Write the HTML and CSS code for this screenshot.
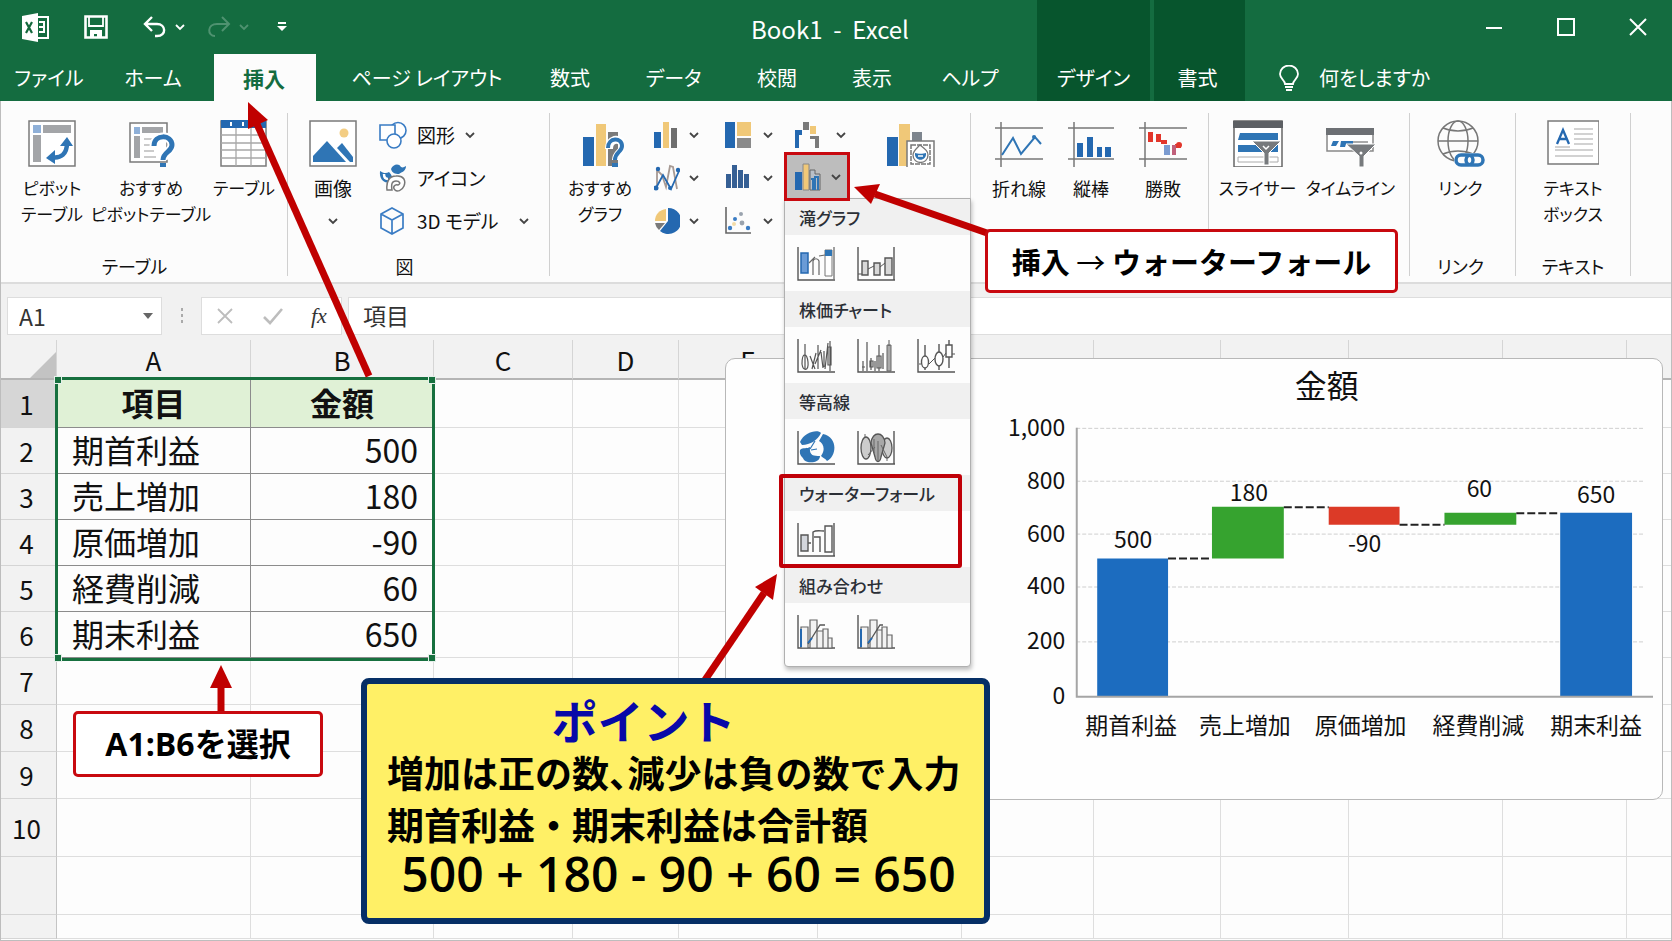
FILE: index.html
```html
<!DOCTYPE html>
<html lang="ja">
<head>
<meta charset="utf-8">
<title>Book1 - Excel</title>
<link rel="stylesheet" href="styles.css">
</head>
<body>
<svg class="defs" aria-hidden="true">
  <symbol id="chev" viewBox="0 0 10 8"><path d="M1 2l4 4 4-4" fill="none" stroke="currentColor" stroke-width="1.8"/></symbol>
  <symbol id="axes" viewBox="0 0 38 34"><path d="M1 0V33H38" fill="none" stroke="#555" stroke-width="1.4"/></symbol>
</svg>
<div class="window">
  <header class="header">
    <div class="titlebar">
      <div class="quick">
        <svg class="logo" viewBox="0 0 28 29" width="28" height="29"><path d="M15 4h11v21H15" fill="none" stroke="#fff" stroke-width="2"/><path d="M0 3L16 0v29L0 26z" fill="#fff"/><path d="M17 9h5M17 14h5M17 19h5M22 8v12" stroke="#fff" stroke-width="2" fill="none"/><path d="M4 9l6 11M10 9L4 20" stroke="#14693d" stroke-width="2.2"/></svg>
        <button class="tool save" aria-label="保存"><svg viewBox="0 0 24 24" width="24" height="24"><path d="M1.500 1.500h21v21h-21z" fill="none" stroke="#fff" stroke-width="2.600"/><path d="M5 2v9h14V2" fill="none" stroke="#fff" stroke-width="1.800"/><path d="M6 23v-8h12v8h-5v-4h-3v4z" fill="#fff"/></svg></button>
        <button class="tool undo" aria-label="元に戻す"><svg viewBox="0 0 24 22" width="24" height="22"><path d="M9 1L2 8l7 7M2 8h12c9 0 10 12 0 12h-2" fill="none" stroke="#fff" stroke-width="2.400"/></svg><svg class="chev" width="10" height="8"><use href="#chev"/></svg></button>
        <button class="tool redo" aria-label="やり直し"><svg viewBox="0 0 24 22" width="24" height="22"><path d="M15 1l7 7-7 7M22 8H10C0 8 0 20 8 20" fill="none" stroke="currentColor" stroke-width="2"/></svg><svg class="chev" width="10" height="8"><use href="#chev"/></svg></button>
        <button class="tool" aria-label="カスタマイズ"><svg viewBox="0 0 10 10" width="10" height="10"><path d="M1 1h8" stroke="#fff" stroke-width="2"/><path d="M0 4h10L5 9z" fill="#fff"/></svg></button>
      </div>
      <h1 class="doc">Book1 &nbsp;-&nbsp; Excel</h1>
      <div class="winbtns">
        <button aria-label="最小化"><svg viewBox="0 0 18 18" width="18" height="18"><path d="M1 10h16" stroke="#fff" stroke-width="2"/></svg></button>
        <button aria-label="最大化"><svg viewBox="0 0 18 18" width="18" height="18"><path d="M1 1h16v16H1z" fill="none" stroke="#fff" stroke-width="2"/></svg></button>
        <button aria-label="閉じる"><svg viewBox="0 0 18 18" width="18" height="18"><path d="M1 1l16 16M17 1L1 17" stroke="#fff" stroke-width="2"/></svg></button>
      </div>
    </div>
    <nav class="tabs">
      <button class="tab t-file">ファイル</button>
      <button class="tab t-home">ホーム</button>
      <button class="tab t-insert active">挿入</button>
      <button class="tab t-page">ページ レイアウト</button>
      <button class="tab t-short">数式</button>
      <button class="tab t-data">データ</button>
      <button class="tab t-short">校閲</button>
      <button class="tab t-view">表示</button>
      <button class="tab t-help">ヘルプ</button>
      <button class="tab context t-design">デザイン</button>
      <button class="tab context t-format">書式</button>
      <button class="tab tell"><svg viewBox="0 0 20 26" width="20" height="26"><path d="M6 19c0-4-5-5-5-10a9 8.500 0 0 1 18 0c0 5-5 6-5 10z" fill="none" stroke="#fff" stroke-width="1.800"/><path d="M6 22h8M7 25h6" stroke="#fff" stroke-width="1.800"/></svg><span>何をしますか</span></button>
    </nav>
  </header>

  <section class="ribbon" aria-label="挿入">
    <div class="group g-table">
      <div class="items">
        <button class="big w-pivot"><svg viewBox="0 0 48 48" width="48" height="48"><path d="M1 2h46v45H1z" fill="#fff" stroke="#7a7a7a" stroke-width="1.500"/><path d="M5 6h8v8H5z" fill="#8fb0d8"/><path d="M15 6h28v8H15zM5 16h8v27H5z" fill="#a3a5a8"/><path d="M23 38c10 2 16-3 16-14" fill="none" stroke="#2f75b5" stroke-width="4.500"/><path d="M32 27l7-9 6 9zM27 31l-9 8 9 6z" fill="#2f75b5"/></svg><span>ピボット<br>テーブル</span></button>
        <button class="big w-rec"><svg viewBox="0 0 48 48" width="48" height="48"><path d="M3 4h37v39H3z" fill="#fff" stroke="#7a7a7a" stroke-width="1.500"/><path d="M7 8h6v7H7z" fill="#8fb0d8"/><path d="M15 8h21v6H15zM7 17h6v22H7z" fill="#a3a5a8"/><path d="M17 20h12M17 26h8M17 32h10M17 38h12" stroke="#bbb" stroke-width="1.500"/><path d="M27 27c0-12 18-12 18-1 0 7-9 8-9 15" fill="none" stroke="#fff" stroke-width="9"/><path d="M27 27c0-12 18-12 18-1 0 7-9 7-9 15" fill="none" stroke="#2f75b5" stroke-width="5"/><path d="M33 44h6v5h-6z" fill="#2f75b5"/></svg><span>おすすめ<br>ピボットテーブル</span></button>
        <button class="big w-tbl"><svg viewBox="0 0 48 48" width="48" height="48"><path d="M1 2h45v45H1z" fill="#fff" stroke="#7a7a7a" stroke-width="1.500"/><path d="M1 1h45v8H1z" fill="#2468b0"/><path d="M1 16h45M1 24h45M1 31h45M1 39h45M16 9v38M31 9v38" stroke="#a8a8a8" stroke-width="1.300"/><path d="M11 3v4M23 3v4M36 3v4" stroke="#fff" stroke-width="2"/></svg><span>テーブル</span></button>
      </div>
      <div class="caption">テーブル</div>
    </div>
    <div class="group g-pic">
      <div class="items">
        <button class="big w-img"><svg viewBox="0 0 48 48" width="48" height="48"><path d="M1 2h46v45H1z" fill="#fff" stroke="#7a7a7a" stroke-width="1.500"/><path d="M4 43V37L18 22 37 43z" fill="#2f75b5"/><path d="M28 29l5-5 11 14v5h-3z" fill="#2f75b5"/><circle cx="35" cy="14" r="4.500" fill="#f3cd83"/></svg><span class="kanji">画像</span><svg class="chev low" width="10" height="8"><use href="#chev"/></svg></button>
        <div class="list">
          <button class="row"><svg viewBox="0 0 28 28" width="28" height="28"><g fill="#fff" stroke="#3a7cc4" stroke-width="1.600"><circle cx="19" cy="9.500" r="8"/><path d="M1 4h15v15H1z"/><circle cx="15" cy="20" r="7"/></g></svg>図形<svg class="chev" width="10" height="8"><use href="#chev"/></svg></button>
          <button class="row"><svg viewBox="0 0 28 28" width="28" height="28"><path d="M1 7c3 2 6 3 9 1 3 3 4 6 3 9-7 4-13-1-12-10z" fill="#2f75b5"/><path d="M5 10c0 3 1 5 4 5" stroke="#fff" stroke-width="2.500" fill="none"/><path d="M12 5c2-5 8-6 10-2 2 1 3 0 5-1 0 5-4 6-7 8-4 0-7-1-8-5z" fill="#2f75b5"/><path d="M8 26c-1-8 2-14 9-14 8-1 10 5 8 10-2 5-7 6-9 4-3-3 0-6 3-5 3-1 2-4-2-4-4 0-5 3-4 9z" fill="#fff" stroke="#777" stroke-width="1.500"/></svg>アイコン</button>
          <button class="row"><svg viewBox="0 0 28 28" width="28" height="28"><path d="M13 1l11 6v14l-11 6-11-6V7zM2 7l11 6 11-6M13 13v14" fill="none" stroke="#3a7cc4" stroke-width="1.700"/></svg>3D モデル<svg class="chev far" width="10" height="8"><use href="#chev"/></svg></button>
        </div>
      </div>
      <div class="caption">図</div>
    </div>
    <div class="group g-chart">
      <div class="items">
        <button class="big w-recchart"><svg viewBox="0 0 48 48" width="48" height="48"><path d="M7 18h11v29H7z" fill="#2468b0"/><path d="M20 5h10v42H20z" fill="#f0c878"/><path d="M32 13h10v34H32z" fill="#7a7a7a"/><path d="M33 30c0-12 14-12 14-2 0 5-7 6-7 13" fill="none" stroke="#fff" stroke-width="8"/><path d="M32 29c0-11 14-11 14-2 0 6-7 6-7 14" fill="none" stroke="#2f75b5" stroke-width="4"/><path d="M36 44h6v5h-6z" fill="#2f75b5"/></svg><span>おすすめ<br>グラフ</span></button>
        <div class="gallery">
          <button class="split" aria-label="縦棒"><svg viewBox="0 0 26 28" width="26" height="28"><path d="M0 11h7v16H0z" fill="#2468b0"/><path d="M9 1h6v26H9z" fill="#f0c878"/><path d="M17 7h6v20h-6z" fill="#6e6e6e"/></svg><svg class="chev" width="10" height="8"><use href="#chev"/></svg></button>
          <button class="split" aria-label="階層"><svg viewBox="0 0 26 28" width="26" height="28"><path d="M0 1h10v26H0z" fill="#2468b0"/><path d="M12 1h14v14H12z" fill="#f0c878"/><path d="M12 17h14v10H12z" fill="#8a8a8a"/></svg><svg class="chev" width="10" height="8"><use href="#chev"/></svg></button>
          <button class="split third" aria-label="滝"><svg viewBox="0 0 26 28" width="26" height="28"><path d="M0 9h7v5H4v13H0z" fill="#2468b0"/><path d="M8 1h6v8H8z" fill="#7a7a7a"/><path d="M15 5h6v8h-6z" fill="#f0c878"/><path d="M15 15h9v12h-4v-9h-5z" fill="#7a7a7a"/></svg><svg class="chev" width="10" height="8"><use href="#chev"/></svg></button>
          <button class="split" aria-label="折れ線"><svg viewBox="0 0 26 28" width="26" height="28"><path d="M3 22V6l5 5 4 12 4-21 3 1 4 22" fill="none" stroke="#a79a94" stroke-width="1.800"/><path d="M2 24L9 11l8 14 8-18" fill="none" stroke="#2468b0" stroke-width="1.800"/><g fill="#2468b0"><circle cx="2" cy="24" r="2.500"/><circle cx="4" cy="5" r="2.200"/><circle cx="24" cy="6" r="2.200"/><circle cx="16" cy="24" r="2"/></g></svg><svg class="chev" width="10" height="8"><use href="#chev"/></svg></button>
          <button class="split" aria-label="統計"><svg viewBox="0 0 26 28" width="26" height="28"><path d="M1 10h5v14H1zM7 1h5v23H7zM13 6h5v18h-5zM19 10h5v14h-5z" fill="#355f94"/></svg><svg class="chev" width="10" height="8"><use href="#chev"/></svg></button>
          <div class="picker">
            <button class="split chosen" aria-label="ウォーターフォール グラフの挿入" aria-expanded="true"><svg viewBox="0 0 26 28" width="26" height="28"><path d="M0 9h7v18H0z" fill="#2468b0"/><path d="M8 1h6v26H8z" fill="#f0c878" stroke="#888"/><path d="M15 7h5v4h5v16H15z" fill="#b9c0c8" stroke="#666"/><path d="M16 16h2v11M20 27V14h3v13" stroke="#2f75b5" stroke-width="2" fill="none"/></svg><svg class="chev" width="10" height="8"><use href="#chev"/></svg></button>
            <div class="menu">
              <h2>滝グラフ</h2>
              <div class="choices">
                <button aria-label="滝 1"><svg viewBox="0 0 38 34" width="38" height="34"><use href="#axes"/><path d="M37 0v33" stroke="#777" stroke-width="1.400"/><path d="M4 6h7v20H4z" fill="#6a9bd6" stroke="#2468b0" stroke-width="1.500"/><path d="M16 28V14c1-3 5-3 6 0v14M12 16l6-6M22 9l6-1" fill="none" stroke="#666" stroke-width="1.200"/><path d="M28 3h7v26h-7z" fill="#fff" stroke="#777"/><path d="M28 3h7v6h-7z" fill="#2f75b5"/></svg></button>
                <button aria-label="滝 2"><svg viewBox="0 0 38 34" width="38" height="34"><use href="#axes"/><path d="M37 0v33" stroke="#555" stroke-width="1.400"/><path d="M5 14h6v14H5zM17 16h6v12h-6zM28 11h7v17h-7z" fill="#d8d8d8" stroke="#555" stroke-width="1.400"/><path d="M1 27h4M11 22l6-3M23 20l5-4" stroke="#555" fill="none"/></svg></button>
              </div>
              <h2>株価チャート</h2>
              <div class="choices">
                <button aria-label="株価 1"><svg viewBox="0 0 38 34" width="38" height="34"><use href="#axes"/><path d="M8 5v26M5 25c0-12 5-12 6-2s-5 9-6 2M13 17l5 13M15 30l4-16M21 6v24M18 25l6-14M24 13l2 16M28 30l3-26M31 8h3v18h-3zM33 2v30M27 12v16" fill="none" stroke="#555" stroke-width="1.200"/></svg></button>
                <button aria-label="株価 2"><svg viewBox="0 0 38 34" width="38" height="34"><use href="#axes"/><path d="M10 3v29M6 22v10M5 28h3M14 19v12M13 22h3v6h-3zM18 22v10M22 6v26M20 17h4v12h-4zM26 14v16" fill="none" stroke="#555" stroke-width="1.200"/><path d="M30 6h4v26h-4z" fill="#aaa" stroke="#666"/><path d="M32 1v6" stroke="#555"/></svg></button>
                <button aria-label="株価 3"><svg viewBox="0 0 38 34" width="38" height="34"><use href="#axes"/><path d="M8 6v25M22 5v26M32 1v28" stroke="#555" stroke-width="1.400"/><g fill="#fff" stroke="#555" stroke-width="1.400"><ellipse cx="8" cy="23" rx="3.500" ry="6"/><ellipse cx="22" cy="20" rx="4" ry="7"/><path d="M29 6h6v12h-6z"/></g><path d="M12 25l6-6M26 18l3-4M2 25h2M35 15h3" stroke="#555"/></svg></button>
              </div>
              <h2>等高線</h2>
              <div class="choices">
                <button aria-label="等高線 1"><svg viewBox="0 0 38 34" width="38" height="34"><use href="#axes"/><path d="M3 11C7 1 21-2 24 2 21 9 13 14 5 14z" fill="#2f75b5"/><path d="M26 3c15 3 14 22 4 27-2-3-4-3-6-5 5-7 2-13-2-15z" fill="#2f75b5"/><path d="M3 19c3-3 7-1 10-3-1 9 4 9 10 9 0 7-12 8-16 4-1-3-5-4-4-10z" fill="#2f75b5"/><path d="M14 19l6-1M18 10l-5 8" stroke="#2f75b5" stroke-width="1.200"/></svg></button>
                <button aria-label="等高線 2"><svg viewBox="0 0 38 34" width="38" height="34"><use href="#axes"/><path d="M37 0v33" stroke="#555" stroke-width="1.400"/><g fill="#ccc" stroke="#555" stroke-width="1.300"><ellipse cx="9" cy="17" rx="5" ry="11"/><ellipse cx="30" cy="17" rx="5" ry="10"/><path d="M14 12c1-12 13-12 14 0l-4 14c-1 6-5 6-6 0z" fill="#a8a8a8"/></g><path d="M8 3v3M21 10v20M11 24l7-8M24 14l6 12M30 27v3M17 8v14" stroke="#666" fill="none"/></svg></button>
              </div>
              <h2>ウォーターフォール</h2>
              <div class="choices">
                <button aria-label="ウォーターフォール"><svg viewBox="0 0 38 34" width="38" height="34"><use href="#axes"/><path d="M37 0v33" stroke="#555" stroke-width="1.400"/><path d="M4 12h7v16H4z" fill="#d3d6dc" stroke="#555" stroke-width="1.400"/><path d="M11 20h3M16 29V9c3-2 7-1 11-1M17 14h6v15M28 3h7v26h-7z" fill="none" stroke="#555" stroke-width="1.400"/></svg></button>
              </div>
              <h2>組み合わせ</h2>
              <div class="choices">
                <button aria-label="組み合わせ 1"><svg viewBox="0 0 38 34" width="38" height="34"><use href="#axes"/><path d="M4 12h7v21H4zM13 5h7v28h-7zM20 16h6v17h-6zM26 14h5v19h-5zM31 23h4v10h-4z" fill="#f2f2f2" stroke="#666" stroke-width="1.200"/><path d="M11 29l12-19h5" fill="none" stroke="#555" stroke-width="1.300"/><path d="M11 28l4-5M4 14v18" stroke="#2468b0" stroke-width="2"/></svg></button>
                <button aria-label="組み合わせ 2"><svg viewBox="0 0 38 34" width="38" height="34"><use href="#axes"/><path d="M4 12h7v21H4zM13 5h7v28h-7zM20 15h5v18h-5zM25 12h5v21h-5zM30 20h5v13h-5z" fill="#f2f2f2" stroke="#666" stroke-width="1.200"/><path d="M11 29l12-19h3" fill="none" stroke="#555" stroke-width="1.300"/><path d="M11 28l4-5M4 14v18" stroke="#2468b0" stroke-width="2"/></svg></button>
              </div>
              <div class="focus-box"></div>
            </div>
          </div>
          <button class="split" aria-label="円"><svg viewBox="0 0 26 28" width="26" height="28"><path d="M14 1a13 13 0 1 1-8 23l8-10z" fill="#2468b0"/><path d="M12 2v12H1A12 12 0 0 1 12 2z" fill="#f0c878"/><path d="M1 16h10l-6 7a12 12 0 0 1-4-7z" fill="#7a7a7a"/></svg><svg class="chev" width="10" height="8"><use href="#chev"/></svg></button>
          <button class="split" aria-label="散布図"><svg viewBox="0 0 26 28" width="26" height="28"><path d="M1 0v26h25" fill="none" stroke="#666" stroke-width="1.600"/><g fill="#3a7cc4"><circle cx="5" cy="21" r="2.200"/><circle cx="10" cy="12" r="2"/><circle cx="23" cy="21" r="2.200"/></g><g fill="#9aa3ae"><circle cx="16" cy="7" r="2"/><circle cx="17" cy="16" r="2.400"/></g><circle cx="9" cy="17" r="2" fill="#f3dca8"/></svg><svg class="chev" width="10" height="8"><use href="#chev"/></svg></button>
        </div>
        <button class="big w-pivotchart" aria-label="ピボットグラフ"><svg viewBox="0 0 48 48" width="48" height="48"><path d="M0 18h11v29H0z" fill="#2468b0"/><path d="M12 5h11v42H12z" fill="#f0c878"/><path d="M25 13h10v10H25z" fill="#7d858e"/><path d="M20 22h27v27H20z" fill="#fff" stroke="#7a7a7a" stroke-width="1.500"/><path d="M24 26h19v19H24z" fill="#fff" stroke="#777" stroke-width="1.500" stroke-dasharray="5 1"/><path d="M33 26c5 4 8 6 8 10 0 10-15 10-15 0 0-4 3-6 7-10z" fill="#fff" stroke="#777" stroke-width="1.300"/><path d="M28 34c3 1 8 1 11 0 1 9-12 9-11 0z" fill="#2f75b5"/><path d="M31 37h5" stroke="#fff" stroke-width="1.500"/></svg></button>
      </div>
    </div>
    <div class="group g-spark">
      <div class="items">
        <button class="big w-spark"><svg viewBox="0 0 48 48" width="48" height="48"><path d="M0 9h48M0 40h48M6 3v45" stroke="#777" stroke-width="1.500"/><path d="M7 36L18 19l8 16 14-17 6 7" fill="none" stroke="#2f75b5" stroke-width="2"/><circle cx="39" cy="18" r="2" fill="#2f75b5"/></svg><span>折れ線</span></button>
        <button class="big w-spark"><svg viewBox="0 0 48 48" width="48" height="48"><path d="M1 9h46M1 40h46M7 3v45" stroke="#777" stroke-width="1.500"/><path d="M10 24h6v14h-6zM20 18h6v20h-6zM30 28h5v10h-5zM38 28h6v10h-6z" fill="#2468b0"/></svg><span>縦棒</span></button>
        <button class="big w-spark"><svg viewBox="0 0 48 48" width="48" height="48"><path d="M0 9h48M0 40h48M6 3v45" stroke="#777" stroke-width="1.500"/><path d="M9 13h5v10H9zM17 15h5v8h-5zM22 21h6v4h-6zM36 25h6v4h-6z" fill="#e2362b"/><circle cx="40" cy="26" r="3" fill="#e2362b"/><path d="M25 26h6v10h-6z" fill="#7b9bd0"/><path d="M33 26h4v10h-4z" fill="#c0607a"/></svg><span>勝敗</span></button>
      </div>
    </div>
    <div class="group g-filter">
      <div class="items">
        <button class="big w-slicer"><svg viewBox="0 0 50 48" width="50" height="48"><path d="M1 2h48v46H1z" fill="#fff" stroke="#666" stroke-width="1.500"/><path d="M0 2h50v7H0z" fill="#5c5f63"/><path d="M7 14h38v7H5zM5 26h40v7H5z" fill="#2f75b5"/><path d="M5 38h40v5H5z" fill="none" stroke="#aaa"/><path d="M19 22h29L36 34v12h-5V34z" fill="#777a7d" stroke="#fff"/><path d="M30 27l3 3 3-3" stroke="#fff" fill="none" stroke-width="1.500"/></svg><span>スライサー</span></button>
        <button class="big w-slicer"><svg viewBox="0 0 50 48" width="50" height="48"><path d="M1 10h46v22H1z" fill="#fff" stroke="#888" stroke-width="1.500"/><path d="M0 9h48v7H0z" fill="#6d7074"/><path d="M7 22h6l-3 5H5zM15 22h12v3h-7l-1 3h-5z" fill="#2f75b5"/><path d="M27 23h15" stroke="#aaa" stroke-width="2"/><path d="M20 25h30L38 37v11h-5V37z" fill="#777a7d" stroke="#fff"/><circle cx="35" cy="34" r="1.500" fill="#fff"/></svg><span>タイムライン</span></button>
      </div>
    </div>
    <div class="group g-link">
      <div class="items">
        <button class="big"><svg viewBox="0 0 48 48" width="48" height="48"><g fill="none" stroke="#777" stroke-width="1.500"><circle cx="21" cy="22" r="20"/><ellipse cx="21" cy="22" rx="10" ry="20"/><path d="M1 22h40M6 9c9 4 21 4 30 0M6 35c9-4 21-4 30 0"/></g><path d="M17 34h31v14H17z" fill="#fcfcfc"/><g fill="none" stroke="#2f75b5" stroke-width="3.500"><rect x="19" y="36" width="17" height="10" rx="5"/><rect x="29" y="36" width="17" height="10" rx="5"/></g></svg><span>リンク</span></button>
      </div>
      <div class="caption">リンク</div>
    </div>
    <div class="group g-text">
      <div class="items">
        <button class="big"><svg viewBox="0 0 52 48" width="52" height="48"><path d="M1 2h51v43H1z" fill="#fff" stroke="#7a7a7a" stroke-width="1.500"/><path d="M10 25l6-14 6 14M12 20h8" fill="none" stroke="#2468b0" stroke-width="2.300"/><path d="M27 10h19M27 15h19M27 20h19M27 25h19M8 31h38M8 37h38M8 28h15" stroke="#c4c4c4" stroke-width="1.300"/></svg><span>テキスト<br>ボックス</span></button>
      </div>
      <div class="caption">テキスト</div>
    </div>
  </section>

  <section class="formula">
    <label class="namebox"><input class="name-input" value="A1" aria-label="名前ボックス"><svg viewBox="0 0 10 6" width="10" height="6"><path d="M0 0h10L5 6z" fill="#666"/></svg></label>
    <svg class="dots" viewBox="0 0 4 16" width="4" height="16"><path d="M1 0h2v3H1zM1 6h2v3H1zM1 12h2v3H1z" fill="#aaa"/></svg>
    <div class="fx">
      <button aria-label="キャンセル"><svg viewBox="0 0 18 18" width="18" height="18"><path d="M2 2l14 14M16 2L2 16" stroke="#bdbdbd" stroke-width="1.800"/></svg></button>
      <button aria-label="入力"><svg viewBox="0 0 20 18" width="20" height="18"><path d="M1 10l6 6L19 2" fill="none" stroke="#bdbdbd" stroke-width="2.600"/></svg></button>
      <button class="fx-label" aria-label="関数の挿入">fx</button>
    </div>
    <input class="formula-input" value="項目" aria-label="数式バー">
  </section>

  <main class="sheet">
    <table class="cells">
      <colgroup><col class="c-head"><col class="c-a"><col class="c-b"><col class="c-c"><col class="c-d"><col class="c-e"><col class="c-f"><col class="c-g"><col class="c-h"><col class="c-i"><col class="c-j"><col class="c-k"><col></colgroup>
      <thead><tr><th class="corner"><svg viewBox="0 0 26 26" width="26" height="26"><path d="M26 0v26H0z" fill="#c3c3c3"/></svg></th><th>A</th><th>B</th><th>C</th><th>D</th><th>E</th><th></th><th></th><th></th><th></th><th></th><th></th><th></th></tr></thead>
      <tbody>
        <tr class="data top"><th class="sel">1</th><td class="key">項目</td><td class="key">金額</td><td></td><td></td><td></td><td></td><td></td><td></td><td></td><td></td><td></td><td></td></tr>
        <tr class="data"><th>2</th><td>期首利益</td><td class="num">500</td><td></td><td></td><td></td><td></td><td></td><td></td><td></td><td></td><td></td><td></td></tr>
        <tr class="data"><th>3</th><td>売上増加</td><td class="num">180</td><td></td><td></td><td></td><td></td><td></td><td></td><td></td><td></td><td></td><td></td></tr>
        <tr class="data"><th>4</th><td>原価増加</td><td class="num">-90</td><td></td><td></td><td></td><td></td><td></td><td></td><td></td><td></td><td></td><td></td></tr>
        <tr class="data"><th>5</th><td>経費削減</td><td class="num">60</td><td></td><td></td><td></td><td></td><td></td><td></td><td></td><td></td><td></td><td></td></tr>
        <tr class="data"><th>6</th><td>期末利益</td><td class="num">650</td><td></td><td></td><td></td><td></td><td></td><td></td><td></td><td></td><td></td><td></td></tr>
        <tr class="mid"><th>7</th><td></td><td></td><td></td><td></td><td></td><td></td><td></td><td></td><td></td><td></td><td></td><td></td></tr>
        <tr class="mid"><th>8</th><td></td><td></td><td></td><td></td><td></td><td></td><td></td><td></td><td></td><td></td><td></td><td></td></tr>
        <tr class="mid"><th>9</th><td></td><td></td><td></td><td></td><td></td><td></td><td></td><td></td><td></td><td></td><td></td><td></td></tr>
        <tr class="tall"><th>10</th><td></td><td></td><td></td><td></td><td></td><td></td><td></td><td></td><td></td><td></td><td></td><td></td></tr>
        <tr class="tall"><th></th><td></td><td></td><td></td><td></td><td></td><td></td><td></td><td></td><td></td><td></td><td></td><td></td></tr>
        <tr class="rest"><th></th><td></td><td></td><td></td><td></td><td></td><td></td><td></td><td></td><td></td><td></td><td></td><td></td></tr>
      </tbody>
    </table>
    <div class="selection"><i class="tl"></i><i class="tr"></i><i class="bl"></i><i class="br"></i></div>

    <figure class="chart">
      <svg viewBox="725 358 938 441" role="img" aria-label="金額">
        <text class="ct" x="1327" y="397">金額</text>
        <g class="gridlines"><path d="M1076 427.500H1646M1076 480.500H1646M1076 533.500H1646M1076 586.500H1646M1076 641.500H1646"/></g>
        <g class="ticks"><text x="1065" y="435">1,000</text><text x="1065" y="488">800</text><text x="1065" y="541">600</text><text x="1065" y="594">400</text><text x="1065" y="649">200</text><text x="1065" y="704">0</text></g>
        <path class="b-total" d="M1097 558h71v138h-71zM1561 512h72v184h-72z"/>
        <path class="b-up" d="M1212 506h72v52h-72zM1445 512h72v12h-72z"/>
        <path class="b-down" d="M1329 506h71v18h-71z"/>
        <path class="axis" d="M1076.500 427V696.500H1654"/>
        <path class="joins" d="M1168 558h44M1284 506.500h45M1400 524h45M1517 512.500h44"/>
        <g class="vals"><text x="1133" y="547">500</text><text x="1249" y="500">180</text><text x="1365" y="551">-90</text><text x="1480" y="496">60</text><text x="1597" y="502">650</text></g>
        <g class="vals"><text x="1131" y="734">期首利益</text><text x="1245" y="734">売上増加</text><text x="1361" y="734">原価増加</text><text x="1479" y="734">経費削減</text><text x="1597" y="734">期末利益</text></g>
      </svg>
    </figure>
  </main>

  <svg class="arrows" viewBox="0 0 1672 941" width="1672" height="941" aria-hidden="true">
    <g stroke="#c00000" stroke-width="7"><path d="M369 376L256 122"/><path d="M987 233L875 194" /><path d="M705 680L764 593"/><path d="M221 714V684"/></g>
    <g fill="#c00000"><path d="M248 102L268 120 248 129z"/><path d="M854 187L880 184 871 204z"/><path d="M777 574L773 600 755 587z"/><path d="M221 665L232 688H210z"/></g>
  </svg>
  <div class="note n-insert">挿入 <span class="thin">→</span> ウォーターフォール</div>
  <div class="note n-select">A1:B6を選択</div>
  <aside class="point">
    <h2>ポイント</h2>
    <p class="half">増加は正の数、減少は負の数で入力</p>
    <p>期首利益・期末利益は合計額</p>
    <p class="sum">500 + 180 - 90 + 60 = 650</p>
  </aside>
</div>
</body>
</html>
```

FILE: styles.css
```css
* { box-sizing: border-box; }
body { margin: 0; background: #fff; color: #111; font-family: "Noto Sans CJK JP", sans-serif; }
button { border: 0; padding: 0; margin: 0; background: none; font: inherit; color: inherit; cursor: pointer; }
input { border: 0; padding: 0; margin: 0; background: none; font: inherit; color: inherit; min-width: 0; }
h1, h2, p, figure { margin: 0; }
svg { display: block; flex: none; }
.defs { position: absolute; width: 0; height: 0; }

.window { position: relative; min-height: 100vh; display: flex; flex-direction: column; overflow: hidden; }
.window::after { content: ""; position: absolute; inset: 101px 0 0; z-index: 6; border: 1px solid #bdbdbd; border-top: 0; pointer-events: none; }

/* title bar and tabs */
.header { background: #146c40; color: #fff; }
.titlebar { display: grid; grid-template-columns: 1fr auto 1fr; align-items: center; height: 54px; padding: 0 14px 0 22px; }
.quick { display: flex; align-items: center; }
.tool { display: flex; align-items: center; gap: 8px; }
.save { margin-left: 34px; }
.undo { margin-left: 35px; }
.redo { margin-left: 22px; color: #4f9270; }
.redo + .tool { margin-left: 28px; }
.doc { position: relative; z-index: 1; font-size: 24px; font-weight: 400; line-height: 32px; padding: 4px 20px 0 0; }
.winbtns { display: flex; gap: 32px; justify-content: flex-end; }
.winbtns button { width: 40px; height: 40px; display: grid; place-items: center; }
.tabs { display: flex; height: 47px; font-size: 20px; font-feature-settings: "palt"; }
.tab { display: flex; align-items: center; justify-content: center; flex: none; white-space: nowrap; }
.t-file { width: 98px; }
.t-home { width: 116px; padding-right: 6px; }
.t-insert { width: 102px; padding-right: 2px; }
.t-page { width: 222px; }
.t-short { width: 64px; }
.t-data { width: 143px; }
.t-view { width: 126px; }
.t-help { width: 70px; }
.active { background: #fcfcfc; color: #146c40; font-weight: 700; font-size: 21px; }
.context { background: #07552d; height: 101px; margin-top: -54px; padding-top: 54px; }
.t-design { width: 113px; margin-left: 32px; }
.t-format { width: 91px; margin-left: 4px; padding-right: 4px; }
.tell { margin-left: 34px; gap: 20px; }

/* ribbon */
.ribbon { display: flex; height: 183px; background: #fcfcfc; border-bottom: 2px solid #dcdcdc; padding-top: 12px; font-size: 17px; }
.group { position: relative; flex: none; height: 163px; border-right: 1px solid #d0d0d0; display: flex; flex-direction: column; justify-content: space-between; font-feature-settings: "palt"; }
.items { display: flex; align-items: flex-start; }
.caption { text-align: center; line-height: 20px; }
.g-table { width: 288px; }
.g-table .items { padding-left: 9px; }
.g-table .caption { padding-right: 18px; }
.g-pic { width: 262px; }
.g-pic .items { padding-left: 13px; }
.g-pic .caption { padding-right: 28px; }
.g-chart { width: 421px; }
.g-chart .items { padding-left: 17px; }
.g-spark { width: 238px; }
.g-spark .items { padding-left: 12px; }
.g-filter { width: 201px; }
.g-filter .items { padding-left: 2px; }
.g-link { width: 106px; padding-right: 4px; }
.g-text { width: 115px; }
.g-link .items, .g-text .items { justify-content: center; }
.big { display: flex; flex-direction: column; align-items: center; padding-top: 6px; line-height: 26px; white-space: nowrap; flex: none; }
.big span { padding-top: 8px; }
.kanji { font-size: 19px; }
.low { margin-top: 16px; }
.w-pivot { width: 86px; }
.w-rec { width: 112px; }
.w-tbl { width: 74px; }
.w-img { width: 64px; }
.w-recchart { width: 66px; }
.w-pivotchart { margin-left: 37px; }
.w-spark { width: 72px; }
.w-slicer { width: 93px; }
.w-spark, .caption { font-size: 18px; }
.chev { color: #444; }
.tool .chev { color: inherit; }
.list { margin-left: 14px; display: flex; flex-direction: column; align-items: flex-start; font-size: 19px; }
.row { display: flex; align-items: center; gap: 10px; height: 43px; white-space: nowrap; }
.far { margin-left: 10px; }
.gallery { display: grid; grid-template-columns: 71px 59px 66px; grid-auto-rows: 43px; margin-left: 21px; }
.split { display: flex; align-items: center; gap: 10px; }
.gallery > .split + .split { gap: 12px; }
.gallery > .split:nth-child(3n+1) { gap: 9px; }
.gallery > .split.third { padding-left: 11px; gap: 15px; }
.picker { position: relative; z-index: 3; }
.chosen { width: 66px; height: 49px; margin: -4px 0; padding-left: 8px; background: #bdbdbd; border: 3px solid #c8090f; }

/* chart type menu */
.menu { position: absolute; left: 0; top: 42px; z-index: -1; width: 187px; background: #fdfdfd; border: 1px solid #b0b0b0; border-radius: 0 0 4px 4px; box-shadow: 1px 3px 4px rgba(0, 0, 0, .25); }
.menu h2 { font-size: 17px; font-weight: 500; line-height: 36px; height: 36px; padding: 1px 0 0 14px; background: #f0f0f0; color: #2b2f36; }
.choices { display: flex; align-items: flex-start; gap: 22px; height: 56px; padding: 12px 0 0 12px; }
.menu .choices:nth-last-child(2) { height: 63px; }
.focus-box { position: absolute; left: -6px; right: 8px; top: 275px; height: 94px; border: 4px solid #c00008; border-radius: 3px; }

/* formula bar */
.formula { display: flex; align-items: center; height: 56px; padding: 7px 0 0 7px; background: #f1f1f1; font-size: 23px; color: #333; }
.namebox { display: flex; align-items: center; width: 155px; height: 38px; background: #fff; border: 1px solid #ddd; padding: 0 8px 0 11px; }
.name-input { flex: 1; }
.dots { margin: 0 17px 0 18px; }
.fx { display: flex; align-items: center; justify-content: space-around; width: 141px; height: 38px; background: #fff; border: 1px solid #ddd; }
.fx-label { font: italic 22px "Liberation Serif", serif; }
.formula-input { flex: 1; height: 38px; margin-left: 6px; padding: 0 0 2px 14px; background: #fff; border: 1px solid #ddd; border-right: 0; }

/* worksheet */
.sheet { position: relative; flex: 1; background: #fdfdfd; }
.cells { width: 100%; table-layout: fixed; border-collapse: separate; border-spacing: 0; font-size: 32px; line-height: 40px; }
.cells th { font-size: 26px; font-weight: 400; padding: 0; background: #f2f2f2; }
.cells td { padding: 0; border-right: 1px solid #dedede; border-bottom: 1px solid #dedede; }
.cells thead th { height: 40px; border-bottom: 2px solid #b5b5b5; border-right: 1px solid #d5d5d5; line-height: 36px; padding-top: 2px; }
.cells tbody th { border-right: 1px solid #c4c4c4; border-bottom: 1px solid #d5d5d5; padding-right: 3px; }
.cells .corner { vertical-align: bottom; }
.corner svg { margin-left: auto; }
.cells .sel { background: #d6d6d6; }
.c-head { width: 57px; }
.c-a { width: 194px; }
.c-b { width: 183px; }
.c-c { width: 139px; }
.c-d { width: 106px; }
.c-e { width: 139px; }
.c-f { width: 144px; }
.c-g { width: 132px; }
.c-h { width: 127px; }
.c-i { width: 128px; }
.c-j { width: 154px; }
.c-k { width: 124px; }
.data { height: 46px; }
.top { height: 48px; }
.data td:nth-child(2), .data td:nth-child(3) { border-color: #8c8c8c; padding: 0 15px 4px; line-height: 36px; }
.data .num { text-align: right; }
.data .key { background: #e0f1d6; text-align: center; font-weight: 700; }
.mid { height: 47px; }
.tall { height: 58px; }
.rest { height: 24px; }
.selection { position: absolute; left: 55px; top: 37px; width: 380px; height: 284px; border: 3px solid #17703f; }
.selection i { position: absolute; width: 8px; height: 8px; background: #17703f; border: 1px solid #e5f0ea; }
.tl { left: -4px; top: -4px; }
.tr { right: -4px; top: -4px; }
.bl { left: -4px; bottom: -4px; }
.br { right: -4px; bottom: -4px; }

/* chart */
.chart { position: absolute; left: 725px; right: 9px; top: 18px; background: #fefefe; border: 1px solid #b8b8b8; border-radius: 10px; }
.chart svg { width: 100%; height: auto; }
.chart text { font-size: 23px; fill: #111; }
.chart .ct { font-size: 32px; text-anchor: middle; }
.ticks { text-anchor: end; }
.vals { text-anchor: middle; }
.gridlines { stroke: #cfcfcf; stroke-dasharray: 4 2; }
.axis { fill: none; stroke: #a5a5a5; stroke-width: 2; }
.joins { stroke: #222; stroke-width: 2; stroke-dasharray: 8 3; }
.b-total { fill: #1c6cbf; }
.b-up { fill: #36a32f; }
.b-down { fill: #dc3a27; }

/* annotations */
.arrows { position: absolute; left: 0; top: 0; z-index: 4; pointer-events: none; }
.note { position: absolute; z-index: 5; background: #fff; border: 3px solid #c8090f; border-radius: 5px; font-weight: 700; text-align: center; white-space: nowrap; color: #000; }
.n-insert { left: 985px; top: 229px; width: 413px; font-size: 29px; line-height: 58px; }
.thin { font-weight: 400; }
.n-select { left: 73px; top: 711px; width: 250px; font-family: "Open Sans", "Noto Sans CJK JP", sans-serif; font-size: 32px; line-height: 60px; }
.point { position: absolute; z-index: 5; left: 361px; top: 678px; width: 629px; height: 246px; background: #fff066; border: 6px solid #062f66; border-radius: 8px; padding: 8px 20px; font-size: 37px; font-weight: 700; line-height: 52px; white-space: nowrap; color: #000; }
.point h2 { font-size: 46px; line-height: 54px; color: #0808a8; text-align: center; padding-right: 64px; }
.half { font-feature-settings: "halt"; }
.sum { font-family: "Open Sans", "Noto Sans CJK JP", sans-serif; font-size: 48px; font-weight: 600; line-height: 48px; padding-left: 6px; text-align: center; }
```
